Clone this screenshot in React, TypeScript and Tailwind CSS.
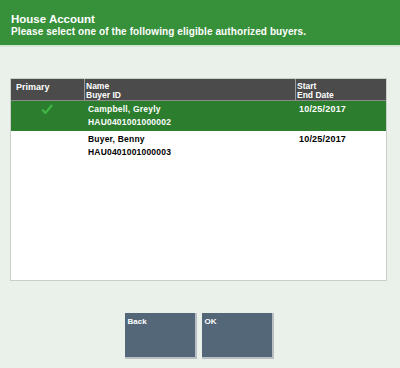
export default function App() {
  const rows = [
    { name: "Campbell, Greyly", id: "HAU0401001000002", date: "10/25/2017", primary: true },
    { name: "Buyer, Benny", id: "HAU0401001000003", date: "10/25/2017", primary: false },
  ];

  return (
    <div className="w-[400px] h-[368px] bg-[#eaf1ea] flex flex-col font-['Liberation_Sans',Arial,sans-serif] overflow-hidden">
      <div className="h-[47px] bg-[#37913b] px-[11px] pt-[13px] text-white font-bold border-b-2 border-[#d6e6d6]">
        <div className="text-[11.5px] leading-[13px]">House Account</div>
        <div className="text-[10px] leading-[11px] tracking-[0.1px]">Please select one of the following eligible authorized buyers.</div>
      </div>

      <div className="ml-[10px] w-[377px] mt-[31px] h-[203px] bg-white border border-[#c9cfc9] flex flex-col">
        <div className="h-[22px] bg-[#4b4b4b] flex text-white text-[8.5px] font-bold leading-[9px] border-b border-[#8a8a8a]">
          <div className="w-[73px] pl-[5px] pt-[4px] text-[9px]">Primary</div>
          <div className="w-[211px] border-l border-[#9a9a9a] pl-[1px] pt-[3px]">
            <div>Name</div>
            <div>Buyer ID</div>
          </div>
          <div className="flex-1 border-l border-[#9a9a9a] pl-[1px] pt-[3px]">
            <div>Start</div>
            <div>End Date</div>
          </div>
        </div>
        {rows.map((r) => (
          <div
            key={r.id}
            className={`h-[30px] flex text-[8.5px] tracking-[0.2px] font-bold leading-[13px] ${r.primary ? "bg-[#2c7d2e] text-white" : "bg-white text-black"}`}
          >
            <div className="w-[73px] flex justify-center pt-[3px] pr-[2px]">
              {r.primary && (
                <svg width="12" height="10" viewBox="0 0 12 10">
                  <path d="M1 5.5 L4.5 9 L11 1" fill="none" stroke="#3fb548" strokeWidth="2.2" />
                </svg>
              )}
            </div>
            <div className="w-[211px] pl-[4px] pt-[2px]">
              <div>{r.name}</div>
              <div>{r.id}</div>
            </div>
            <div className="flex-1 pl-[4px] pt-[2px] text-[9px]">{r.date}</div>
          </div>
        ))}
      </div>

      <div className="flex justify-center gap-[5px] mt-[32px] pr-[2px]">
        {["Back", "OK"].map((b) => (
          <button
            key={b}
            className="w-[72px] h-[46px] bg-[#536779] text-white text-[8px] font-bold text-left flex items-start px-[3px] pt-[3px] border-r-2 border-b-2 border-[#b8c0c4]"
          >
            {b}
          </button>
        ))}
      </div>
    </div>
  );
}
